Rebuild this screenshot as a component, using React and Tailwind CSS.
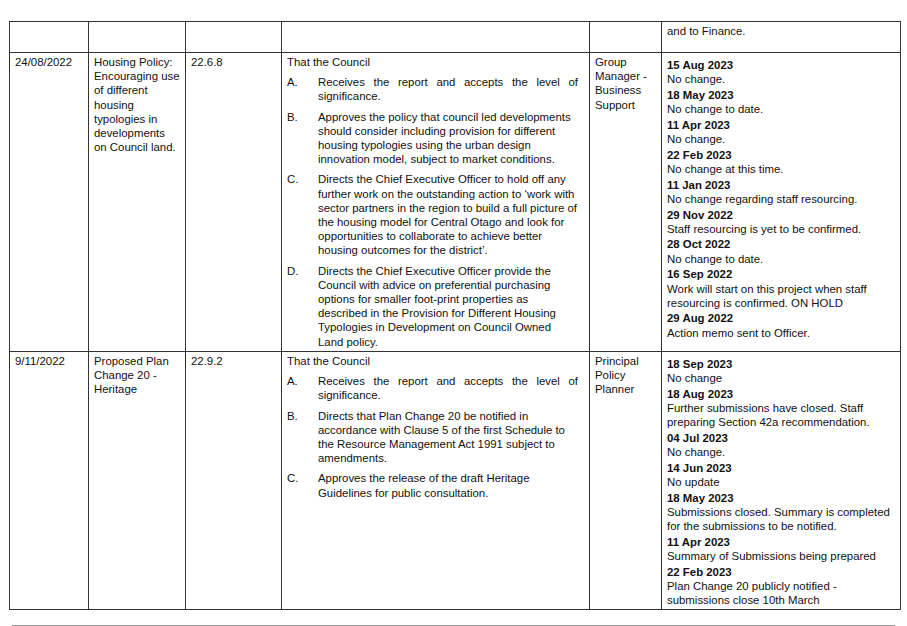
const row1Updates = [
  ['15 Aug 2023', 'No change.'],
  ['18 May 2023', 'No change to date.'],
  ['11 Apr 2023', 'No change.'],
  ['22 Feb 2023', 'No change at this time.'],
  ['11 Jan 2023', 'No change regarding staff resourcing.'],
  ['29 Nov 2022', 'Staff resourcing is yet to be confirmed.'],
  ['28 Oct 2022', 'No change to date.'],
  ['16 Sep 2022', 'Work will start on this project when staff resourcing is confirmed. ON HOLD'],
  ['29 Aug 2022', 'Action memo sent to Officer.'],
];

const row2Updates = [
  ['18 Sep 2023', 'No change'],
  ['18 Aug 2023', 'Further submissions have closed. Staff preparing Section 42a recommendation.'],
  ['04 Jul 2023', 'No change.'],
  ['14 Jun 2023', 'No update'],
  ['18 May 2023', 'Submissions closed. Summary is completed for the submissions to be notified.'],
  ['11 Apr 2023', 'Summary of Submissions being prepared'],
  ['22 Feb 2023', 'Plan Change 20 publicly notified - submissions close 10th March'],
];

const row1Items = [
  ['A.', 'Receives the report and accepts the level of significance.', true],
  ['B.', 'Approves the policy that council led developments should consider including provision for different housing typologies using the urban design innovation model, subject to market conditions.'],
  ['C.', 'Directs the Chief Executive Officer to hold off any further work on the outstanding action to ‘work with sector partners in the region to build a full picture of the housing model for Central Otago and look for opportunities to collaborate to achieve better housing outcomes for the district’.'],
  ['D.', 'Directs the Chief Executive Officer provide the Council with advice on preferential purchasing options for smaller foot-print properties as described in the Provision for Different Housing Typologies in Development on Council Owned Land policy.'],
];

const row2Items = [
  ['A.', 'Receives the report and accepts the level of significance.', true],
  ['B.', 'Directs that Plan Change 20 be notified in accordance with Clause 5 of the first Schedule to the Resource Management Act 1991 subject to amendments.'],
  ['C.', 'Approves the release of the draft Heritage Guidelines for public consultation.'],
];

function Resolution({ items }) {
  return (
    <div>
      <div>That the Council</div>
      {items.map(([l, t, j]) => (
        <div key={l} className="flex mt-[6px] pr-[6px]">
          <span className="w-[31px] shrink-0">{l}</span>
          <span className={j ? 'text-justify [text-align-last:left]' : ''}>{t}</span>
        </div>
      ))}
    </div>
  );
}

function Updates({ list }) {
  return (
    <div className="pt-[3px]">
      {list.map(([d, t]) => (
        <div key={d} className="mb-[1.5px]">
          <div className="font-bold">{d}</div>
          <div>{t}</div>
        </div>
      ))}
    </div>
  );
}

const td = 'border border-[#333] align-top px-[5px] pt-[2px] pb-0';

export default function App() {
  return (
    <div className="w-[907px] h-[626px] overflow-hidden bg-white text-[#111] text-[11.4px] leading-[14.2px]" style={{ fontFamily: '"Liberation Sans", Arial, sans-serif' }}>
      <div className="pt-[21px] pl-[9px]">
        <table className="border-collapse table-fixed w-[891px]">
          <colgroup>
            <col className="w-[79px]" />
            <col className="w-[97px]" />
            <col className="w-[96px]" />
            <col className="w-[308px]" />
            <col className="w-[72px]" />
            <col className="w-[239px]" />
          </colgroup>
          <tbody>
            <tr className="h-[31px]">
              <td className={td}></td>
              <td className={td}></td>
              <td className={td}></td>
              <td className={td}></td>
              <td className={td}></td>
              <td className={td}>and to Finance.</td>
            </tr>
            <tr className="h-[299px]">
              <td className={td}>24/08/2022</td>
              <td className={td}>Housing Policy: Encouraging use of different housing typologies in developments on Council land.</td>
              <td className={td}>22.6.8</td>
              <td className={td}><Resolution items={row1Items} /></td>
              <td className={td}>Group Manager - Business Support</td>
              <td className={td}><Updates list={row1Updates} /></td>
            </tr>
            <tr className="h-[246px]">
              <td className={td}>9/11/2022</td>
              <td className={td}>Proposed Plan Change 20 - Heritage</td>
              <td className={td}>22.9.2</td>
              <td className={td}><Resolution items={row2Items} /></td>
              <td className={td}>Principal Policy Planner</td>
              <td className={td}><Updates list={row2Updates} /></td>
            </tr>
          </tbody>
        </table>
      </div>
      <div className="mt-[15px] mx-[12px] border-t border-[#999]"></div>
      <div className="text-right pr-[10px] text-[10.5px] leading-[13px] mt-[1px]">Page 20 of 24</div>
    </div>
  );
}
